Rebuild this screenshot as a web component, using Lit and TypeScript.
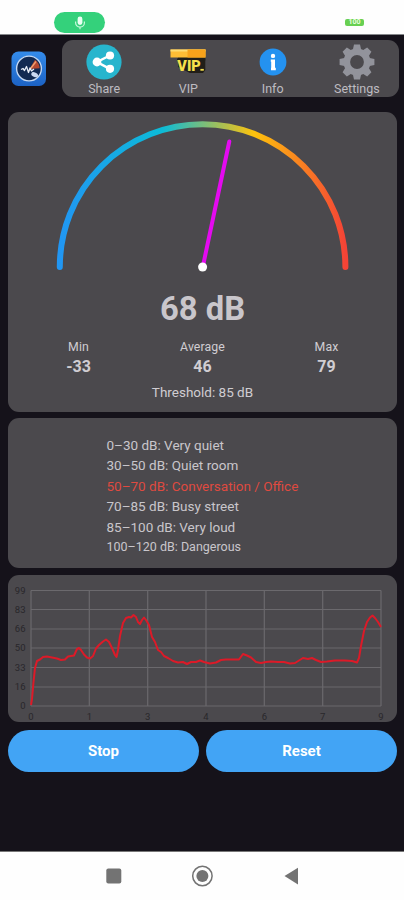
import { LitElement, html, svg, css } from "lit";
import { customElement } from "lit/decorators.js";
import { classMap } from "lit/directives/class-map.js";

const levels = [
  "0–30 dB: Very quiet",
  "30–50 dB: Quiet room",
  "50–70 dB: Conversation / Office",
  "70–85 dB: Busy street",
  "85–100 dB: Very loud",
  "100–120 dB: Dangerous",
];
const activeLevel = 2;

const stats = [
  { label: "Min", value: "-33" },
  { label: "Average", value: "46" },
  { label: "Max", value: "79" },
];

/* Chart trace in the coordinates of the 388 x 147 chart card. */
const trace: number[][] = [
  [23, 130], [24, 124], [25.5, 107], [27, 93], [29, 86], [32, 84.5], [35, 82], [39, 81.5], [44, 82.5],
  [49, 83.5], [53, 85], [57, 84.5], [60, 81.5], [63, 81], [66, 80.5], [69, 74], [71, 73], [73, 75],
  [76, 79.5], [79, 82.5], [82, 83.5], [85, 81], [88, 73.5], [91, 70], [95, 66.5], [98, 64.5], [101, 67],
  [104, 73], [107, 80], [108.5, 82], [110, 75], [112, 61], [115, 48], [118, 43], [121, 42], [123, 42.5],
  [125.5, 40], [128, 42], [130, 47], [132, 49], [134, 45], [136, 42.5], [138, 45], [141, 50], [144, 62],
  [147, 67], [150, 75], [153, 77], [156, 81], [160, 83], [165, 86], [170, 87.5], [175, 87], [179, 89],
  [183, 87], [188, 87], [192, 85.5], [196, 87], [202, 88.5], [208, 87.5], [213, 85], [218, 84.5],
  [231, 84.5], [235, 79], [239, 80.5], [243, 82.5], [248, 87], [253, 88], [258, 87], [263, 86.5],
  [270, 87], [276, 87], [282, 88.5], [287, 88], [291, 85.5], [295, 83], [300, 84], [304, 83], [308, 85],
  [313, 87], [319, 86.5], [327, 85.5], [337, 85.5], [344, 86], [349, 87.5], [351, 83], [353, 71],
  [356, 56], [359, 47], [362, 42.5], [364.5, 40.5], [367, 43], [370, 47], [373, 52],
];

const micIcon = html`<svg width="12" height="14" viewBox="0 0 12 14">
  <rect x="3.6" y="0.5" width="4.8" height="8.5" rx="2.4" fill="#e9fff2" />
  <path d="M1.6 5.5v1.2a4.4 4.4 0 0 0 8.8 0V5.5M6 11v2.3" fill="none" stroke="#c9f7dc" stroke-width="1.2" />
</svg>`;

const logo = html`<svg width="36" height="36" viewBox="0 0 36 36">
  <defs>
    <linearGradient id="tile" x1="0" y1="0" x2="0" y2="1">
      <stop offset="0" stop-color="#348ceb" /><stop offset="1" stop-color="#1c62c4" />
    </linearGradient>
  </defs>
  <rect x="0.5" y="0.5" width="34.5" height="34.5" rx="7" fill="url(#tile)" />
  <circle cx="18" cy="17.5" r="12.4" fill="#122a52" stroke="#c4d8f2" stroke-width="1.4" />
  <path d="M18.5 18 24 8.8a10.8 10.8 0 0 1 4.6 8.4z" fill="#b4472f" />
  <path d="M18.5 19 25 10.5" stroke="#f0a070" stroke-width="1.4" />
  <path d="M10 18.5l2-1 1.5 2 2-4 2 6 1.5-4.5 1.5 3 2.5-2" fill="none" stroke="#e8eef8" stroke-width="1.3" stroke-linejoin="round" />
  <ellipse cx="23.7" cy="23.7" rx="3.6" ry="2.2" fill="#ccdaf2" transform="rotate(25 23.7 23.7)" />
</svg>`;

const shareIcon = html`<svg width="36" height="36" viewBox="0 0 36 36">
  <circle cx="18" cy="18" r="17.6" fill="#27b5cd" />
  <path d="M23.8 11.5 11 18l12.8 6.8" fill="none" stroke="#fff" stroke-width="2.5" />
  <circle cx="24" cy="11.5" r="4.1" fill="#fff" />
  <circle cx="11" cy="18" r="4.4" fill="#fff" />
  <circle cx="24" cy="24.8" r="4.1" fill="#fff" />
</svg>`;

const vipIcon = html`<svg width="36" height="36" viewBox="0 0 36 36">
  <path d="M8 12h27.3v14l-2.3 3H20L8 23z" fill="#211e18" />
  <path d="M0.5 5.5h35v8h-35z" fill="#ffbd35" />
  <path d="M0.5 5.5h35v2h-35z" fill="#ffdc72" />
  <path d="M17.5 5.5h18v8h-18z" fill="#f7a21b" />
  <path d="M7 14.5h28.3v2H7z" fill="#211e18" />
  <text x="7.3" y="27.2" class="vip">VIP</text>
  <rect x="30.4" y="24.9" width="3.4" height="1.8" fill="#f6e04c" />
</svg>`;

const infoIcon = html`<svg width="36" height="36" viewBox="0 0 36 36">
  <circle cx="18" cy="18" r="13.4" fill="#2492f0" />
  <circle cx="18" cy="11.9" r="2.2" fill="#fff" />
  <path d="M15.8 15.5h4.2v8.2h0.8v2.6h-4.8v-2.6h0.2v-5.9h-0.4z" fill="#fff" />
</svg>`;

const gearIcon = html`<svg width="36" height="36" viewBox="0 0 36 36">
  ${[0, 45, 90, 135, 180, 225, 270, 315].map(
    (a) => svg`<path d="M13.7 6.5 15 0.6h6l1.3 5.9z" fill="#92939b" transform="rotate(${a} 18 18)" />`
  )}
  <circle cx="18" cy="18" r="10.2" fill="none" stroke="#92939b" stroke-width="6.6" />
</svg>`;

const actions = [
  { label: "Share", icon: shareIcon },
  { label: "VIP", icon: vipIcon },
  { label: "Info", icon: infoIcon },
  { label: "Settings", icon: gearIcon },
];

@customElement("app-root")
export class AppRoot extends LitElement {
  static styles = css`
    :host {
      display: flex;
      flex-direction: column;
      height: 900px;
      background: #15121a;
      color: #d0cdd2;
      font-family: Roboto, "Liberation Sans", sans-serif;
      overflow: hidden;
    }
    svg { display: block; }
    .status {
      display: flex;
      justify-content: space-between;
      box-sizing: border-box;
      height: 35px;
      flex: none;
      padding: 12px 39px 0 54px;
      background: #fefefe;
      border-bottom: 1px solid #85878a;
    }
    .mic {
      display: flex;
      align-items: center;
      justify-content: center;
      width: 51px;
      height: 21px;
      border-radius: 11px;
      background: #34d17b;
    }
    .battery {
      width: 19px;
      height: 7px;
      margin: 7px 1px 0 0;
      border-radius: 2px;
      background: #68d052;
      color: #eaffdf;
      font-size: 7px;
      font-weight: 700;
      line-height: 7px;
      text-align: center;
    }
    .top {
      display: flex;
      align-items: center;
      flex: none;
      height: 57px;
      padding: 5px 4px 0 11px;
    }
    .toolbar {
      display: grid;
      grid-template-columns: repeat(4, 1fr);
      width: 337px;
      height: 57px;
      margin-left: 15px;
      border-radius: 11px;
      background: #4b494d;
    }
    .action {
      display: flex;
      flex-direction: column;
      align-items: center;
      padding-top: 4px;
      font-size: 12.5px;
      line-height: 18px;
      color: #bebcc1;
    }
    .vip {
      font: 900 14.5px Roboto, sans-serif;
      fill: #f6e04c;
      letter-spacing: 0;
    }
    .card {
      flex: none;
      box-sizing: border-box;
      width: 389px;
      margin-left: 8px;
      border-radius: 11px;
      background: #4b494d;
    }
    .meter { height: 300px; margin-top: 15px; }
    .reading {
      padding-top: 1px;
      text-align: center;
      font-size: 32.8px;
      line-height: 40px;
      font-weight: 700;
      color: #c9c6cb;
    }
    .stats {
      display: grid;
      grid-template-columns: repeat(3, 124px);
      justify-content: center;
      margin-top: 9px;
      text-align: center;
    }
    .label { font-size: 12.3px; line-height: 19px; letter-spacing: 0.1px; }
    .value { font-size: 16px; line-height: 20px; font-weight: 700; }
    .threshold {
      margin-top: 5px;
      text-align: center;
      font-size: 13.5px;
      line-height: 20px;
    }
    .levels {
      height: 150px;
      margin-top: 6px;
      padding: 16.5px 0 0 98.5px;
    }
    .level { font-size: 13.5px; line-height: 20.5px; color: #c9c6cb; }
    .level:last-child { font-size: 12.5px; }
    .active { color: #df4a40; }
    .chart { height: 147px; margin-top: 7px; }
    .tick { font: 9.5px Roboto, sans-serif; fill: #29272b; }
    .buttons {
      display: grid;
      grid-template-columns: 191px 191px;
      gap: 7px;
      margin: 8px 0 0 8px;
    }
    .button {
      height: 42px;
      padding: 0;
      border: 0;
      border-radius: 21px;
      background: #42a4f5;
      color: #fff;
      font: 700 15px/42px Roboto, sans-serif;
    }
    .nav {
      flex: none;
      height: 49px;
      margin-top: auto;
      background: #fefefe;
      border-top: 1px solid #777;
      box-sizing: border-box;
    }
  `;

  private gauge() {
    return html`<svg width="388" height="176" viewBox="0 0 388 176">
      <defs>
        <linearGradient id="arc" gradientUnits="userSpaceOnUse" x1="51.5" y1="0" x2="337.5" y2="0">
          <stop offset="0" stop-color="#2196f3" />
          <stop offset="0.36" stop-color="#0cbbd7" />
          <stop offset="0.68" stop-color="#fec20c" />
          <stop offset="1" stop-color="#f44336" />
        </linearGradient>
      </defs>
      <path d="M51.8 155A142.8 142.8 0 0 1 337.4 155" fill="none" stroke="url(#arc)" stroke-width="6" stroke-linecap="round" />
      <path d="M194.8 154.8 221.3 29.5" stroke="#e40af0" stroke-width="4" stroke-linecap="round" />
      <circle cx="194.6" cy="155" r="4.5" fill="#fff" />
    </svg>`;
  }

  private chart() {
    const xs = [23, 81.3, 139.7, 198, 256.3, 314.7, 373];
    const ys = [15.5, 34.5, 54, 73, 92.5, 112, 131];
    const yLabels = ["99", "83", "66", "50", "33", "16", "0"];
    const xLabels = ["0", "1", "3", "4", "6", "7", "9"];
    return html`<svg width="388" height="147" viewBox="0 0 388 147">
      ${xs.map((x) => svg`<path d="M${x} 15.5V131" stroke="#6b696d" stroke-width="1.2" />`)}
      ${ys.map((y) => svg`<path d="M23 ${y}H373" stroke="#6b696d" stroke-width="1.2" />`)}
      ${ys.map((y, i) => svg`<text class="tick" x="17.5" y=${y + 3.3} text-anchor="end">${yLabels[i]}</text>`)}
      ${xs.map((x, i) => svg`<text class="tick" x=${x} y="144.5" text-anchor="middle">${xLabels[i]}</text>`)}
      <polyline points=${trace.map((p) => p.join(",")).join(" ")} fill="none" stroke="#dc1a28" stroke-width="2" stroke-linejoin="round" />
    </svg>`;
  }

  render() {
    return html`
      <div class="status">
        <div class="mic">${micIcon}</div>
        <div class="battery">100</div>
      </div>
      <div class="top">
        ${logo}
        <div class="toolbar">
          ${actions.map((a) => html`<div class="action">${a.icon}<span>${a.label}</span></div>`)}
        </div>
      </div>
      <div class="card meter">
        ${this.gauge()}
        <div class="reading">68 dB</div>
        <div class="stats">
          ${stats.map((s) => html`<div><div class="label">${s.label}</div><div class="value">${s.value}</div></div>`)}
        </div>
        <div class="threshold">Threshold: 85 dB</div>
      </div>
      <div class="card levels">
        ${levels.map((l, i) => html`<div class=${classMap({ level: true, active: i === activeLevel })}>${l}</div>`)}
      </div>
      <div class="card chart">${this.chart()}</div>
      <div class="buttons">
        <button class="button">Stop</button>
        <button class="button">Reset</button>
      </div>
      <div class="nav">
        <svg width="404" height="48" viewBox="0 0 404 48">
          <rect x="106.3" y="16.5" width="15" height="15" rx="2" fill="#737373" />
          <circle cx="202.4" cy="24" r="9.7" fill="none" stroke="#737373" stroke-width="1.5" />
          <circle cx="202.4" cy="24" r="6" fill="#737373" />
          <path d="M284.5 24 298 15.7v16.8z" fill="#737373" />
        </svg>
      </div>
    `;
  }
}
